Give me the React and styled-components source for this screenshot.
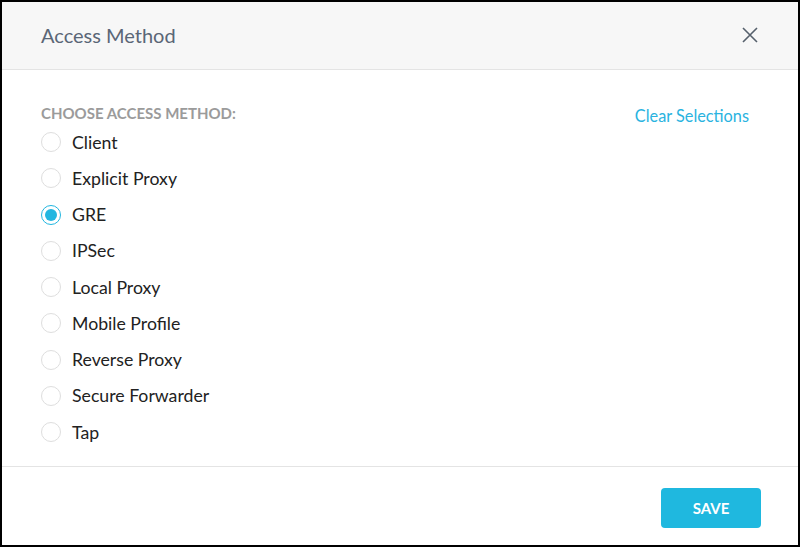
import React, { useState } from "react";
import styled, { createGlobalStyle } from "styled-components";

const Global = createGlobalStyle`
  html, body { margin: 0; padding: 0; background: #fff; }
  body { font-family: Lato, "Open Sans", sans-serif; }
  * { box-sizing: border-box; }
`;

const Dialog = styled.div`
  width: 800px;
  height: 547px;
  border: 2px solid #000;
  display: flex;
  flex-direction: column;
  background: #fff;
`;

const Header = styled.div`
  height: 68px;
  flex: none;
  background: #f7f7f7;
  border-bottom: 1px solid #e4e4e4;
  display: flex;
  align-items: center;
  justify-content: space-between;
  padding: 0 38px 0 39px;
`;

const Title = styled.h2`
  margin: 0;
  font-size: 20px;
  font-weight: 400;
  color: #5a6676;
  padding-bottom: 1px;
`;

const CloseButton = styled.button`
  border: none;
  background: none;
  padding: 0;
  width: 20px;
  height: 20px;
  display: flex;
  align-items: center;
  justify-content: center;
  cursor: pointer;
  margin-bottom: 1px;
`;

const Body = styled.div`
  flex: 1;
  padding: 35px 49px 0 39px;
  display: flex;
  justify-content: space-between;
  align-items: flex-start;
`;

const Column = styled.div`
  display: flex;
  flex-direction: column;
`;

const SectionLabel = styled.div`
  font-size: 15px;
  font-weight: 700;
  color: #9b9b9b;
  text-transform: uppercase;
  line-height: 17px;
  margin-bottom: 2px;
`;

const RadioRow = styled.label`
  display: flex;
  align-items: center;
  gap: 11px;
  height: 36.25px;
  cursor: pointer;
  font-size: 17.7px;
  color: #222;
`;

const RadioCircle = styled.span`
  width: 20px;
  height: 20px;
  flex: none;
  border-radius: 50%;
  border: 1px solid ${(p) => (p.$checked ? "#22b6e0" : "#dedede")};
  display: flex;
  align-items: center;
  justify-content: center;
  background: #fff;
  &::after {
    content: "";
    width: 12px;
    height: 12px;
    border-radius: 50%;
    background: ${(p) => (p.$checked ? "#22b6e0" : "transparent")};
  }
`;

const LinkButton = styled.button`
  border: none;
  background: none;
  padding: 0;
  margin-top: 1px;
  font-family: Lato, sans-serif;
  font-size: 16.3px;
  color: #2ab3df;
  cursor: pointer;
`;

const Footer = styled.div`
  height: 79px;
  flex: none;
  border-top: 1px solid #e4e4e4;
  display: flex;
  align-items: center;
  justify-content: flex-end;
  padding: 3px 37px 0 0;
`;

const SaveButton = styled.button`
  width: 100px;
  height: 40px;
  border: none;
  border-radius: 4px;
  background: #1fb8df;
  color: #fff;
  font-family: Lato, sans-serif;
  font-weight: 700;
  font-size: 15px;
  padding-top: 2px;
  cursor: pointer;
`;

const options = [
  "Client",
  "Explicit Proxy",
  "GRE",
  "IPSec",
  "Local Proxy",
  "Mobile Profile",
  "Reverse Proxy",
  "Secure Forwarder",
  "Tap",
];

export default function App() {
  const [selected, setSelected] = useState("GRE");
  return (
    <>
      <Global />
      <Dialog>
        <Header>
          <Title>Access Method</Title>
          <CloseButton aria-label="Close">
            <svg width="16" height="16" viewBox="0 0 16 16">
              <path d="M1 1 L15 15 M15 1 L1 15" stroke="#56606c" strokeWidth="1.6" fill="none" />
            </svg>
          </CloseButton>
        </Header>
        <Body>
          <Column>
            <SectionLabel>Choose Access Method:</SectionLabel>
            {options.map((o) => (
              <RadioRow key={o} onClick={() => setSelected(o)}>
                <RadioCircle $checked={selected === o} />
                {o}
              </RadioRow>
            ))}
          </Column>
          <LinkButton onClick={() => setSelected(null)}>Clear Selections</LinkButton>
        </Body>
        <Footer>
          <SaveButton>SAVE</SaveButton>
        </Footer>
      </Dialog>
    </>
  );
}
